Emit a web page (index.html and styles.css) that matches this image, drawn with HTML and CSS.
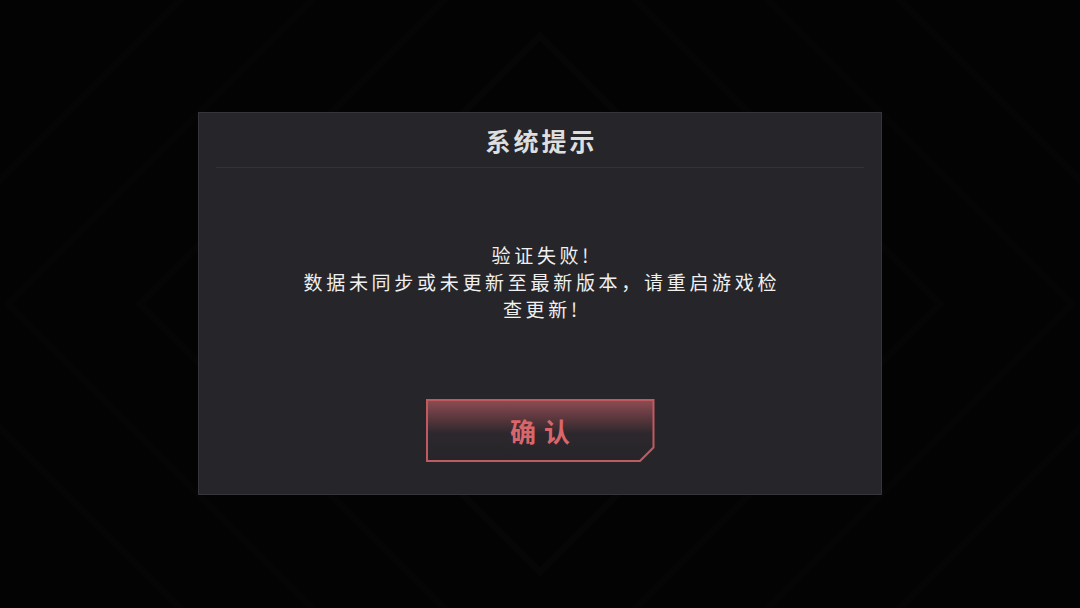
FILE: index.html
```html
<!DOCTYPE html>
<html lang="zh-CN">
<head>
<meta charset="utf-8">
<title>系统提示</title>
<link rel="stylesheet" href="styles.css">
</head>
<body>
<div class="stage">
  <div class="dialog">
    <div class="dialog-header">
      <h1 class="dialog-title">系统提示</h1>
    </div>
    <div class="divider"></div>
    <div class="dialog-body">
      <p class="message">验证失败!<br>数据未同步或未更新至最新版本，请重启游戏检查更新!</p>
    </div>
    <div class="dialog-actions">
      <button class="btn-confirm" type="button"><span class="btn-inner">确 认</span></button>
    </div>
  </div>
</div>
</body>
</html>
```

FILE: styles.css
```css
html, body {
  margin: 0;
  padding: 0;
}

body {
  width: 1080px;
  height: 608px;
  overflow: hidden;
  background-color: #030304;
  background-image: url("data:image/svg+xml;utf8,<svg xmlns='http://www.w3.org/2000/svg' width='1080' height='608' viewBox='0 0 1080 608'><g fill='none' stroke-width='7'><polygon points='540,-360 1204,304 540,968 -124,304' stroke='rgba(255,255,255,0.010)'/><polygon points='540,-228 1072,304 540,836 8,304' stroke='rgba(255,255,255,0.012)'/><polygon points='540,-96 940,304 540,704 140,304' stroke='rgba(255,255,255,0.013)'/><polygon points='540,36 808,304 540,572 272,304' stroke='rgba(255,255,255,0.014)'/><polygon points='540,168 676,304 540,440 404,304' stroke='rgba(255,255,255,0.010)'/></g></svg>");
  background-repeat: no-repeat;
  font-family: "Noto Sans CJK SC", "Noto Sans", sans-serif;
}

.stage {
  display: flex;
  justify-content: center;
  padding-top: 112px;
}

.dialog {
  box-sizing: border-box;
  width: 684px;
  height: 383px;
  background: #262529;
  border: 1px solid #36353a;
  display: flex;
  flex-direction: column;
}

.dialog-header {
  height: 54px;
  display: flex;
  align-items: center;
  justify-content: center;
}

.dialog-title {
  margin: 0;
  font-size: 25px;
  font-weight: 700;
  line-height: 52px;
  letter-spacing: 3px;
  padding-left: 3px;
  color: #dedede;
}

.divider {
  height: 1px;
  margin: 0 17px;
  background: #333237;
}

.dialog-body {
  padding-top: 73px;
  display: flex;
  justify-content: center;
}

.message {
  margin: 0;
  width: 490px;
  text-align: center;
  font-size: 19px;
  line-height: 27px;
  letter-spacing: 3.7px;
  padding-left: 3.7px;
  color: #f0f0f0;
}

.dialog-actions {
  margin-top: 77px;
  display: flex;
  justify-content: center;
}

.btn-confirm {
  box-sizing: border-box;
  width: 229px;
  height: 63px;
  margin: 0;
  padding: 2px;
  border: none;
  background: #bf5a60;
  clip-path: polygon(0 0, 100% 0, 100% calc(100% - 14px), calc(100% - 14px) 100%, 0 100%);
  cursor: pointer;
  display: flex;
}

.btn-inner {
  flex: 1;
  display: flex;
  align-items: center;
  justify-content: center;
  background: linear-gradient(180deg, #8c4b52 0%, #5c383e 28%, #2d282d 55%, #262529 100%);
  clip-path: polygon(0 0, 100% 0, 100% calc(100% - 13px), calc(100% - 13px) 100%, 0 100%);
  font-family: "Noto Sans CJK SC", "Noto Sans", sans-serif;
  font-size: 26px;
  font-weight: 700;
  letter-spacing: 1px;
  padding-left: 1px;
  color: #d9666b;
}
```
